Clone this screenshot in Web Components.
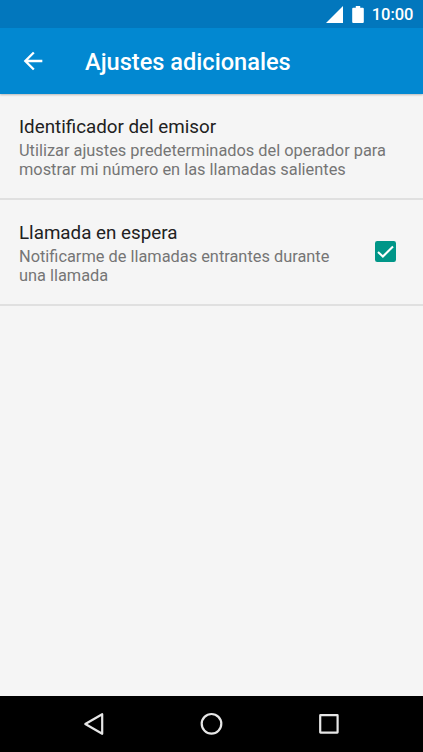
<!DOCTYPE html>
<html lang="es">
<head>
<meta charset="utf-8">
<meta name="viewport" content="width=device-width, initial-scale=1">
<title>Ajustes adicionales</title>
<style>
  html, body {
    margin: 0;
    height: 100%;
    overflow: hidden;
  }
  body {
    font-family: Roboto, "Noto Sans", sans-serif;
  }
</style>
</head>
<body>
<settings-screen>
  <status-bar slot="top" time="10:00"></status-bar>
  <action-bar slot="top">Ajustes adicionales</action-bar>
  <setting-item>
    Identificador del emisor
    <span slot="summary">Utilizar ajustes predeterminados del operador para mostrar mi número en las llamadas salientes</span>
  </setting-item>
  <setting-item>
    Llamada en espera
    <span slot="summary">Notificarme de llamadas entrantes durante una llamada</span>
    <check-box slot="widget" checked></check-box>
  </setting-item>
  <navigation-bar slot="bottom"></navigation-bar>
</settings-screen>

<script>
// Page frame: bars on top, list in the middle, navigation below
class SettingsScreen extends HTMLElement {
  constructor() {
    super();
    this.attachShadow({ mode: "open" });
    this.shadowRoot.innerHTML = `
      <style>
        :host {
          display: flex;
          flex-direction: column;
          height: 100vh;
          background: #f5f5f5;
        }
        header {
          flex: none;
          box-shadow: 0 1px 2px rgba(0, 0, 0, 0.25);
        }
        main {
          flex: 1;
          min-height: 0;
        }
      </style>
      <header><slot name="top"></slot></header>
      <main><slot></slot></main>
      <slot name="bottom"></slot>
    `;
  }
}
customElements.define("settings-screen", SettingsScreen);

class StatusBar extends HTMLElement {
  constructor() {
    super();
    this.attachShadow({ mode: "open" });
    this.shadowRoot.innerHTML = `
      <style>
        :host {
          display: flex;
          justify-content: flex-end;
          align-items: center;
          box-sizing: border-box;
          height: 28px;
          padding-right: 9.5px;
          background: #0277bd;
          color: #fff;
          font-size: 16.5px;
          font-weight: 500;
          line-height: 28px;
        }
        svg {
          display: block;
          fill: #fff;
        }
        .signal {
          margin-right: 9px;
        }
        .battery {
          margin-right: 8px;
        }
        .time {
          padding-top: 2px;
        }
      </style>
      <svg class="signal" width="17" height="17" viewBox="0 0 17 17"><path d="M0 17L17 0V17Z"/></svg>
      <svg class="battery" width="12" height="17" viewBox="0 0 12 17"><path d="M3.8 0h4.4v1.7h2.6q1 0 1 1V16q0 1-1 1H1.2q-1 0-1-1V2.7q0-1 1-1h2.6z"/></svg>
      <span class="time"></span>
    `;
  }
  connectedCallback() {
    this.shadowRoot.querySelector(".time").textContent = this.getAttribute("time");
  }
}
customElements.define("status-bar", StatusBar);

class ActionBar extends HTMLElement {
  constructor() {
    super();
    this.attachShadow({ mode: "open" });
    this.shadowRoot.innerHTML = `
      <style>
        :host {
          display: flex;
          align-items: center;
          height: 66px;
          background: #0288d1;
          color: #fff;
        }
        button {
          display: flex;
          margin: 0;
          padding: 0 0 0 19px;
          border: 0;
          background: none;
        }
        h1 {
          margin: 0 0 0 38px;
          padding-top: 2px;
          font-size: 23.6px;
          font-weight: 500;
          line-height: 28px;
          white-space: nowrap;
        }
      </style>
      <button aria-label="Atrás">
        <svg width="28" height="28" viewBox="0 0 24 24" fill="#fff"><path d="M20 11H7.83l5.59-5.59L12 4l-8 8 8 8 1.41-1.41L7.83 13H20v-2z"/></svg>
      </button>
      <h1><slot></slot></h1>
    `;
  }
}
customElements.define("action-bar", ActionBar);

class SettingItem extends HTMLElement {
  constructor() {
    super();
    this.attachShadow({ mode: "open" });
    this.shadowRoot.innerHTML = `
      <style>
        :host {
          display: flex;
          align-items: center;
          box-sizing: border-box;
          height: 106px;
          padding: 0 19px;
          border-bottom: 2px solid #e0e0e0;
        }
        .text {
          flex: 1;
          padding-top: 1.4px;
        }
        .title {
          color: #212121;
          font-size: 18.8px;
          line-height: 26px;
        }
        .summary {
          padding-top: 0.7px;
          color: #757575;
          font-size: 16.37px;
          line-height: 19.2px;
        }
      </style>
      <div class="text">
        <div class="title"><slot></slot></div>
        <div class="summary"><slot name="summary"></slot></div>
      </div>
      <slot name="widget"></slot>
    `;
  }
}
customElements.define("setting-item", SettingItem);

class CheckBox extends HTMLElement {
  constructor() {
    super();
    this.attachShadow({ mode: "open" });
    this.shadowRoot.innerHTML = `
      <style>
        :host {
          display: block;
          flex: none;
          margin: 0 8px 1px 28px;
        }
        svg {
          display: block;
        }
        path {
          display: none;
        }
        rect {
          fill: none;
          stroke: #757575;
          stroke-width: 2;
        }
        :host([checked]) rect {
          fill: #009688;
          stroke: #009688;
        }
        :host([checked]) path {
          display: block;
        }
      </style>
      <svg width="21" height="21" viewBox="0 0 21 21">
        <rect x="1" y="1" width="19" height="19" rx="1.2"/>
        <path d="M3 10.9L7.9 15.5L18 5.6" fill="none" stroke="#fff" stroke-width="2.1"/>
      </svg>
    `;
    this.addEventListener("click", () => this.toggleAttribute("checked"));
  }
}
customElements.define("check-box", CheckBox);

class NavigationBar extends HTMLElement {
  constructor() {
    super();
    this.attachShadow({ mode: "open" });
    this.shadowRoot.innerHTML = `
      <style>
        :host {
          display: flex;
          flex: none;
          justify-content: center;
          align-items: center;
          gap: 89.5px;
          box-sizing: border-box;
          height: 56.5px;
          background: #000;
        }
        svg {
          display: block;
          fill: none;
          stroke: #e6e6e6;
          stroke-width: 2.2;
          stroke-linejoin: round;
        }
      </style>
      <svg width="28" height="28" viewBox="0 0 28 28"><path d="M5.3 14L22.2 4.2V23.8Z"/></svg>
      <svg width="28" height="28" viewBox="0 0 28 28"><circle cx="13.5" cy="13.8" r="9.8"/></svg>
      <svg width="28" height="28" viewBox="0 0 28 28"><rect x="5.2" y="5.2" width="17.4" height="17.4" rx="0.3"/></svg>
    `;
  }
}
customElements.define("navigation-bar", NavigationBar);
</script>
</body>
</html>
